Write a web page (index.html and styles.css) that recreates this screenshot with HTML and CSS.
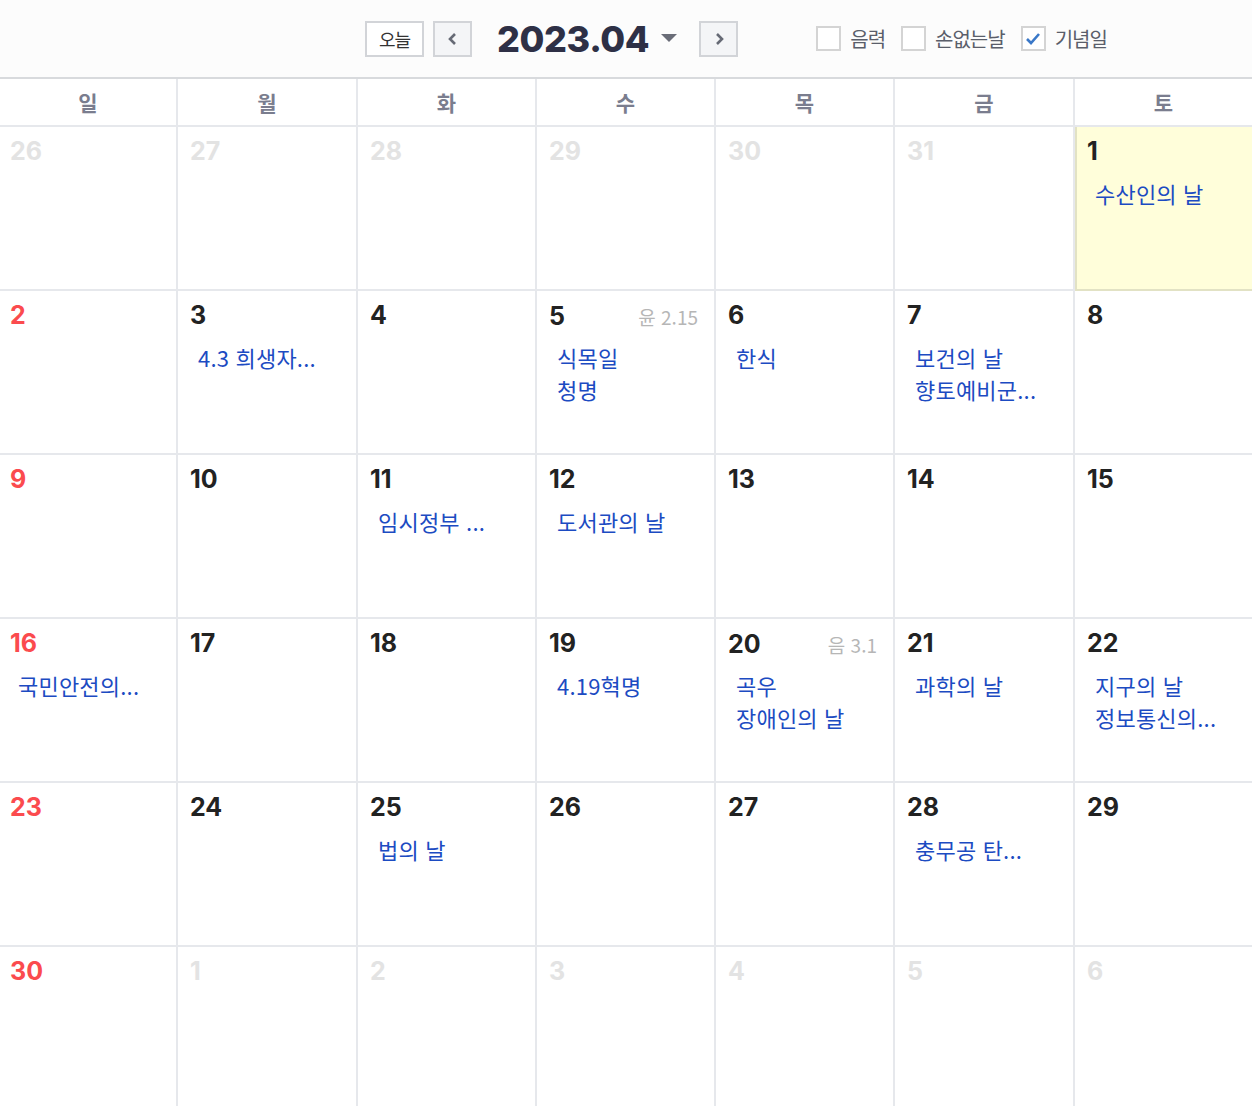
FILE: index.html
```html
<!DOCTYPE html>
<html lang="ko">
<head>
<meta charset="utf-8">
<title>2023.04</title>
<link rel="stylesheet" href="styles.css">
</head>
<body>
<div class="topbar">
  <button class="btn-today">오늘</button>
  <button class="btn-arrow"><svg width="14" height="16" viewBox="0 0 14 16"><path d="M9 3 L4 8 L9 13" fill="none" stroke="#666a75" stroke-width="2.6"/></svg></button>
  <div class="title">2023.04</div>
  <span class="caret"></span>
  <button class="btn-arrow next"><svg width="14" height="16" viewBox="0 0 14 16"><path d="M5 3 L10 8 L5 13" fill="none" stroke="#666a75" stroke-width="2.6"/></svg></button>
  <div class="opts">
    <label class="opt"><span class="box"></span>음력</label>
    <label class="opt"><span class="box"></span>손없는날</label>
    <label class="opt"><span class="box checked"><svg width="16" height="14" viewBox="0 0 16 14"><path d="M2 7 L6 11 L14 2" fill="none" stroke="#3a78c8" stroke-width="2.6"/></svg></span>기념일</label>
  </div>
</div>
<div class="weekdays">
  <div>일</div><div>월</div><div>화</div><div>수</div><div>목</div><div>금</div><div>토</div>
</div>
<div class="grid">
  <div class="cell"><div class="head"><span class="num dim">26</span></div></div>
  <div class="cell"><div class="head"><span class="num dim">27</span></div></div>
  <div class="cell"><div class="head"><span class="num dim">28</span></div></div>
  <div class="cell"><div class="head"><span class="num dim">29</span></div></div>
  <div class="cell"><div class="head"><span class="num dim">30</span></div></div>
  <div class="cell"><div class="head"><span class="num dim">31</span></div></div>
  <div class="cell today"><div class="head"><span class="num">1</span></div><div class="ev">수산인의 날</div></div>

  <div class="cell"><div class="head"><span class="num sun">2</span></div></div>
  <div class="cell"><div class="head"><span class="num">3</span></div><div class="ev">4.3 희생자...</div></div>
  <div class="cell"><div class="head"><span class="num">4</span></div></div>
  <div class="cell"><div class="head"><span class="num">5</span><span class="lunar">윤 2.15</span></div><div class="ev">식목일</div><div class="ev">청명</div></div>
  <div class="cell"><div class="head"><span class="num">6</span></div><div class="ev">한식</div></div>
  <div class="cell"><div class="head"><span class="num">7</span></div><div class="ev">보건의 날</div><div class="ev">향토예비군...</div></div>
  <div class="cell"><div class="head"><span class="num">8</span></div></div>

  <div class="cell"><div class="head"><span class="num sun">9</span></div></div>
  <div class="cell"><div class="head"><span class="num">10</span></div></div>
  <div class="cell"><div class="head"><span class="num">11</span></div><div class="ev">임시정부 ...</div></div>
  <div class="cell"><div class="head"><span class="num">12</span></div><div class="ev">도서관의 날</div></div>
  <div class="cell"><div class="head"><span class="num">13</span></div></div>
  <div class="cell"><div class="head"><span class="num">14</span></div></div>
  <div class="cell"><div class="head"><span class="num">15</span></div></div>

  <div class="cell"><div class="head"><span class="num sun">16</span></div><div class="ev">국민안전의...</div></div>
  <div class="cell"><div class="head"><span class="num">17</span></div></div>
  <div class="cell"><div class="head"><span class="num">18</span></div></div>
  <div class="cell"><div class="head"><span class="num">19</span></div><div class="ev">4.19혁명</div></div>
  <div class="cell"><div class="head"><span class="num">20</span><span class="lunar">음 3.1</span></div><div class="ev">곡우</div><div class="ev">장애인의 날</div></div>
  <div class="cell"><div class="head"><span class="num">21</span></div><div class="ev">과학의 날</div></div>
  <div class="cell"><div class="head"><span class="num">22</span></div><div class="ev">지구의 날</div><div class="ev">정보통신의...</div></div>

  <div class="cell"><div class="head"><span class="num sun">23</span></div></div>
  <div class="cell"><div class="head"><span class="num">24</span></div></div>
  <div class="cell"><div class="head"><span class="num">25</span></div><div class="ev">법의 날</div></div>
  <div class="cell"><div class="head"><span class="num">26</span></div></div>
  <div class="cell"><div class="head"><span class="num">27</span></div></div>
  <div class="cell"><div class="head"><span class="num">28</span></div><div class="ev">충무공 탄...</div></div>
  <div class="cell"><div class="head"><span class="num">29</span></div></div>

  <div class="cell"><div class="head"><span class="num sun">30</span></div></div>
  <div class="cell"><div class="head"><span class="num dim">1</span></div></div>
  <div class="cell"><div class="head"><span class="num dim">2</span></div></div>
  <div class="cell"><div class="head"><span class="num dim">3</span></div></div>
  <div class="cell"><div class="head"><span class="num dim">4</span></div></div>
  <div class="cell"><div class="head"><span class="num dim">5</span></div></div>
  <div class="cell"><div class="head"><span class="num dim">6</span></div></div>
</div>
</body>
</html>
```

FILE: styles.css
```css
* { box-sizing: border-box; }
html, body { margin: 0; padding: 0; background: #fff; }
body {
  font-family: "Inter", "Noto Sans CJK KR", sans-serif;
  color: #222;
  width: 1252px;
  overflow: hidden;
}
button { font-family: inherit; cursor: pointer; padding: 0; }

.topbar {
  height: 79px;
  background: #fcfcfc;
  border-bottom: 2px solid #d8dadd;
  display: flex;
  align-items: center;
  padding-left: 365px;
}
.btn-today {
  width: 59px;
  height: 36px;
  background: #fff;
  border: 2px solid #d2d4d8;
  font-family: "Noto Sans CJK KR", sans-serif;
  font-size: 18px;
  color: #333;
  letter-spacing: -1px;
}
.btn-arrow {
  width: 39px;
  height: 36px;
  margin-left: 9px;
  background: #f4f5f7;
  border: 2px solid #d2d4d8;
  display: flex;
  align-items: center;
  justify-content: center;
}
.btn-arrow.next { margin-left: 22px; }
.title {
  margin-left: 25px;
  font-size: 36px;
  font-weight: 800;
  color: #2e3046;
  letter-spacing: -0.4px;
  line-height: 1;
}
.caret {
  margin-left: 12px;
  width: 0; height: 0;
  border-left: 8px solid transparent;
  border-right: 8px solid transparent;
  border-top: 8px solid #6a6d78;
  margin-top: -2px;
}
.opts {
  display: flex;
  align-items: center;
  margin-left: 78px;
  gap: 16px;
}
.opt {
  display: flex;
  align-items: center;
  gap: 9px;
  font-family: "Noto Sans CJK KR", sans-serif;
  font-size: 20px;
  color: #5a5e6a;
  letter-spacing: -1px;
}
.box {
  width: 25px;
  height: 25px;
  border: 2px solid #d4d4d4;
  background: #fff;
  display: flex;
  align-items: center;
  justify-content: center;
}

.weekdays,
.grid {
  display: grid;
  grid-template-columns: 178fr 180fr 179fr 179fr 179fr 180fr 177fr;
}
.weekdays {
  height: 48px;
  border-bottom: 2px solid #e6e8ec;
}
.weekdays div {
  display: flex;
  align-items: center;
  justify-content: center;
  font-family: "Noto Sans CJK KR", sans-serif;
  font-weight: bold;
  font-size: 21px;
  color: #7a7d8e;
  border-right: 2px solid #e6e8ec;
}
.weekdays div:last-child { border-right: none; }

.grid { grid-auto-rows: 164px; }
.cell {
  border-right: 2px solid #e6e8ec;
  border-bottom: 2px solid #e6e8ec;
  padding: 12px 16px 0 12px;
}
.cell:nth-child(7n) { border-right: none; }
.cell:nth-child(7n+1) { padding-left: 10px; }
.cell.today {
  background: #fffeda;
  box-shadow: inset 2px 0 0 #e2e2c4;
  border-bottom: 2px solid #e2e2c4;
}
.head {
  display: flex;
  justify-content: space-between;
  align-items: baseline;
  height: 25px;
  margin-bottom: 13px;
}
.num {
  font-size: 25px;
  font-weight: 700;
  line-height: 25px;
  color: #222;
}
.num.sun { color: #fb4b4e; }
.num.dim { color: #e3e3e3; }
.lunar {
  font-family: "Noto Sans CJK KR", sans-serif;
  font-size: 19px;
  color: #b6b6b6;
}
.ev {
  padding-left: 8px;
  font-family: "Noto Sans CJK KR", sans-serif;
  font-size: 22px;
  line-height: 32px;
  color: #1c4bc2;
  white-space: nowrap;
  letter-spacing: 0.2px;
}
```
